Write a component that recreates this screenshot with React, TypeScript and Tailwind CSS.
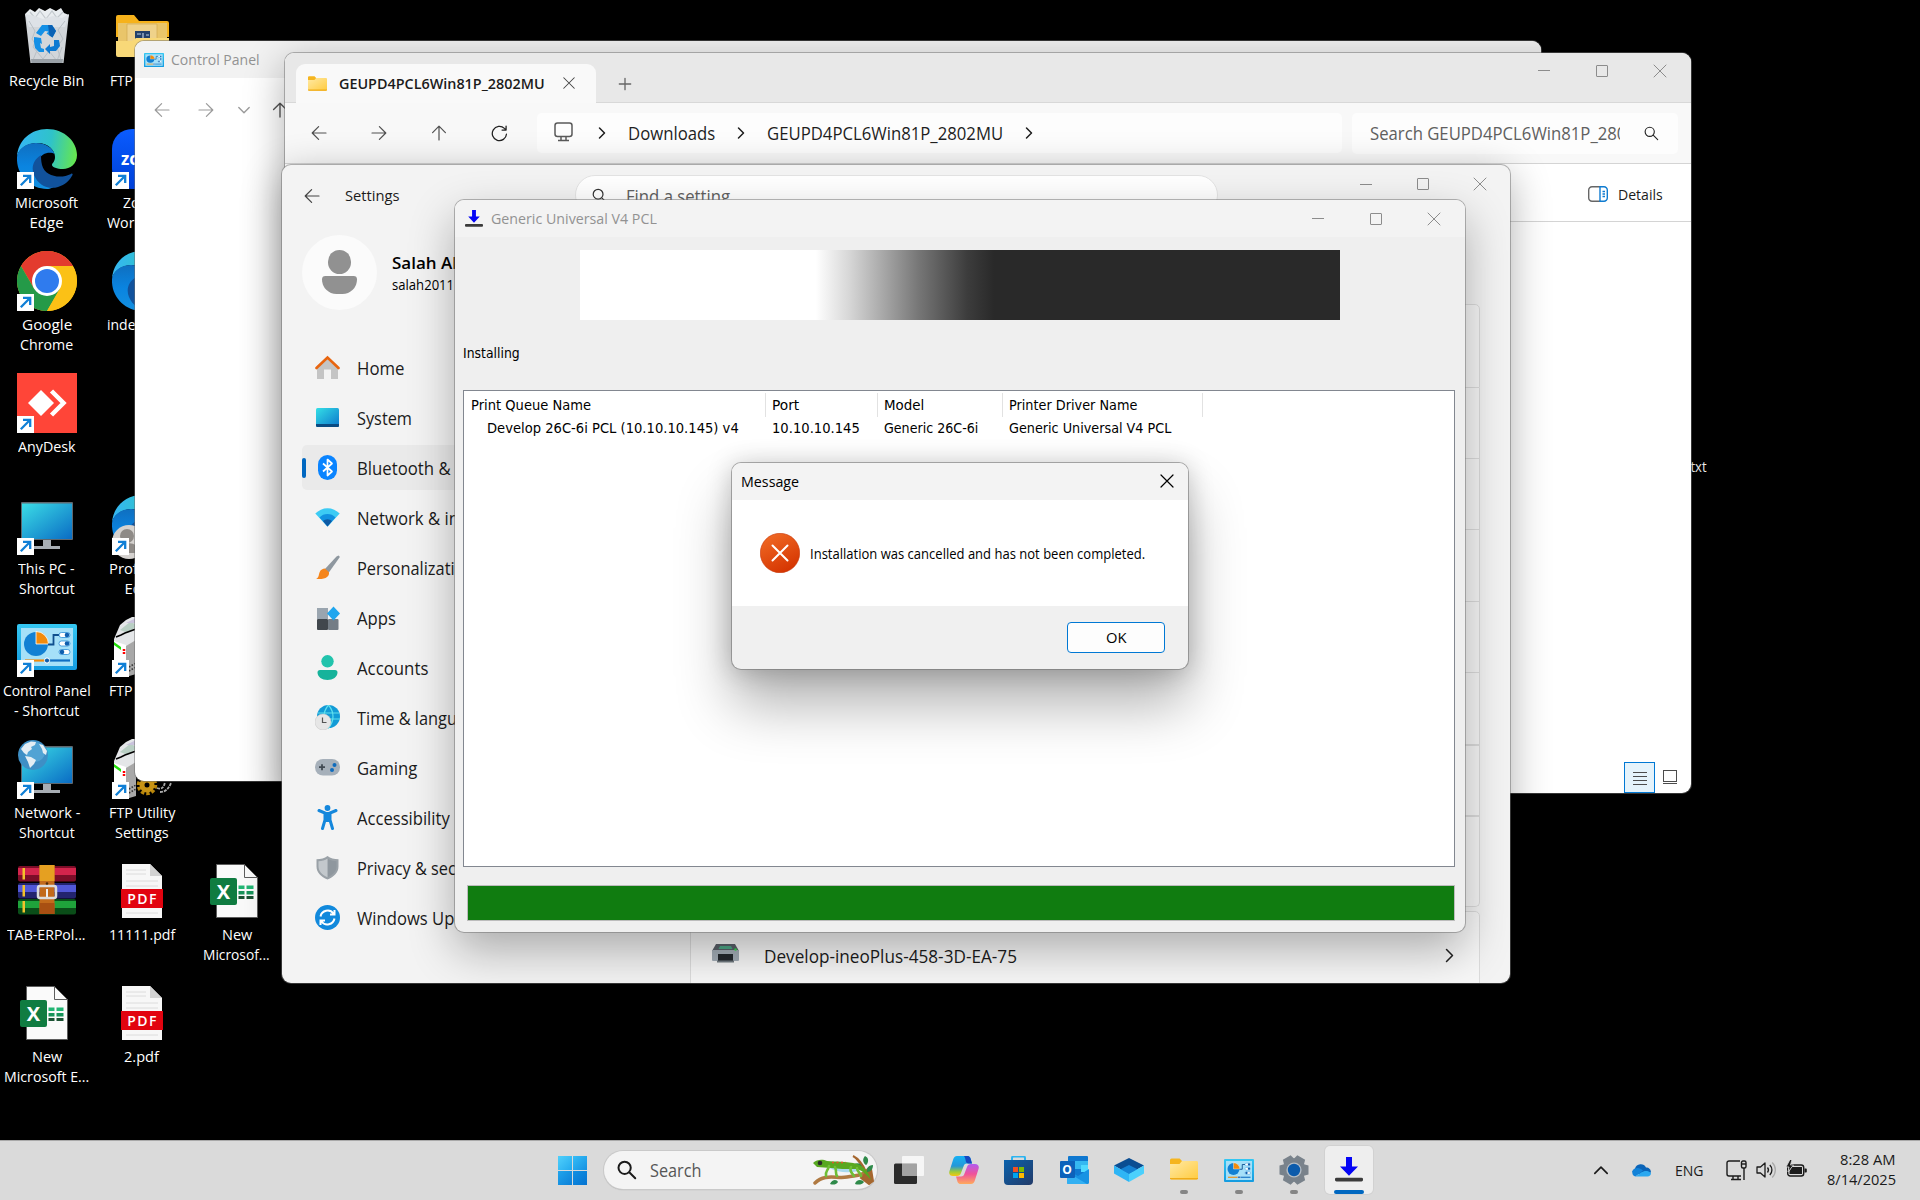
import { useLayoutEffect, useRef, useState, type ReactNode } from "react";

/* Single-line text condensed or widened to an exact width. */
function Fit({ w, className = "", children }: { w: number; className?: string; children: ReactNode }) {
  const ref = useRef<HTMLSpanElement>(null);
  const [k, setK] = useState(1);
  useLayoutEffect(() => {
    if (ref.current) setK(w / ref.current.offsetWidth);
  }, [w]);
  return (
    <span className={"block shrink-0 whitespace-nowrap " + className} style={{ width: w }}>
      <span ref={ref} className="inline-block origin-left" style={{ transform: `scaleX(${k})` }}>
        {children}
      </span>
    </span>
  );
}

/* ---------- line glyphs ---------- */

function Line({ d, s = 16, sw = 1.2, className = "" }: { d: string; s?: number; sw?: number; className?: string }) {
  return (
    <svg width={s} height={s} viewBox="0 0 16 16" fill="none" stroke="currentColor" strokeWidth={sw} strokeLinecap="round" strokeLinejoin="round" className={"shrink-0 " + className}>
      <path d={d} />
    </svg>
  );
}
const LEFT = "M15 8H1.2M7.6 1.6 1.2 8l6.4 6.4";
const RIGHT = "M1 8h13.8M8.4 1.6 14.8 8l-6.4 6.4";
const UP = "M8 15V1.2M1.6 7.6 8 1.2l6.4 6.4";
const CROSS = "M2 2l12 12M14 2 2 14";
const CHEV_R = "M5.5 3l5 5-5 5";
const CHEV_D = "M2.8 5.5 8 10.7l5.2-5.2";
const MAG = "M11 6.2a4.9 4.9 0 1 1-9.8 0 4.9 4.9 0 0 1 9.8 0zM9.8 9.8l4.8 4.8";

function Captions({ cell, h }: { cell: string; h: string }) {
  return (
    <div className={"ml-auto flex shrink-0 pr-[2px] text-[#8c8c8c] " + h}>
      <div className={"flex items-center justify-center " + cell}>
        <div className="h-px w-3 bg-[#8c8c8c]" />
      </div>
      <div className={"flex items-center justify-center " + cell}>
        <div className="h-3 w-3 rounded-[1px] border border-[#8c8c8c]" />
      </div>
      <div className={"flex items-center justify-center " + cell}>
        <Line d={CROSS} s={16} sw={1} />
      </div>
    </div>
  );
}

/* ---------- colour icons ---------- */

function Folder({ className = "" }: { className?: string }) {
  return (
    <svg viewBox="0 0 28 23" preserveAspectRatio="none" className={"shrink-0 " + className}>
      <defs>
        <linearGradient id="fold" x1="0" y1="0" x2="1" y2="1">
          <stop offset="0" stopColor="#ffe9a4" />
          <stop offset="1" stopColor="#ffcb3f" />
        </linearGradient>
      </defs>
      <path d="M0 2a1.6 1.6 0 0 1 1.6-1.6h8L12 3.200V7H0z" fill="#f5b51f" />
      <path d="M0 6.200h9.500l2.500-3h14.500A1.500 1.500 0 0 1 28 4.700V21a1.500 1.500 0 0 1-1.500 1.500h-25A1.500 1.500 0 0 1 0 21z" fill="url(#fold)" />
      <path d="M0 20.800h28a1.600 1.600 0 0 1-1.500 1.700h-25A1.600 1.600 0 0 1 0 20.800z" fill="#f0ab17" />
    </svg>
  );
}

function PanelIcon({ className = "" }: { className?: string }) {
  return (
    <svg viewBox="0 0 60 46" preserveAspectRatio="none" className={"shrink-0 " + className}>
      <defs>
        <linearGradient id="cpf" x1="0" y1="0" x2="0" y2="1">
          <stop offset="0" stopColor="#35c7f2" />
          <stop offset="1" stopColor="#149be0" />
        </linearGradient>
      </defs>
      <rect width="60" height="46" rx="2" fill="url(#cpf)" />
      <rect x="4" y="4" width="52" height="38" fill="#a5e0f8" />
      <circle cx="19" cy="20" r="12" fill="#1280d3" />
      <path d="M19 7.500A12.500 12.500 0 0 1 31.500 20H19z" fill="#f28b0c" stroke="#fff" strokeWidth=".8" />
      <path d="M31 20.500h5.500V11H42" fill="none" stroke="#0f4f8e" strokeWidth="1.800" />
      <rect x="42" y="8.500" width="11" height="5" rx="2.500" fill="#fff" stroke="#1280d3" strokeWidth=".7" />
      <circle cx="50" cy="11" r="2.300" fill="#0f5fae" />
      <rect x="42" y="17" width="11" height="5" rx="2.500" fill="#fff" stroke="#1280d3" strokeWidth=".7" />
      <circle cx="50" cy="19.500" r="2.300" fill="#0f5fae" />
      <rect x="42" y="25.500" width="11" height="5" rx="2.500" fill="#fff" stroke="#1280d3" strokeWidth=".7" />
      <circle cx="45" cy="28" r="2.300" fill="#0f5fae" />
      <path d="M8 36.500h20" stroke="#f28b0c" strokeWidth="2.200" />
      <path d="M32 36.500h21" stroke="#0f6fc4" strokeWidth="2.200" />
      <circle cx="30" cy="36.500" r="2.600" fill="#0f5fae" stroke="#fff" />
    </svg>
  );
}

function InstallIcon({ className = "" }: { className?: string }) {
  return (
    <svg viewBox="0 0 28 26" preserveAspectRatio="none" className={"shrink-0 " + className}>
      <path d="M11 0h6v10h6l-9 9.500L5 10h6z" fill="#0505f5" />
      <rect y="21.500" width="28" height="4" rx="1.500" fill="#3b3b3b" />
    </svg>
  );
}

function Recycle() {
  return (
    <svg width="60" height="60" viewBox="0 0 60 60">
      <path d="M8 7l5-5 5 3 4-4 6 3 5-3 6 3 5-3 3 5 5 2-4 12H12z" fill="#e9edf0" />
      <path d="M13 5l5 6 5-7 6 8 6-8 5 7 6-6" fill="none" stroke="#c3c9ce" strokeWidth="1.200" />
      <path d="M8 7l5.500 49h33L52 7l-7 4-9-2-10 3-8-3z" fill="#dde2e6" opacity=".95" />
      <path d="M12 14l6 10-3 8 6 9-5 12M48 14l-7 9 5 9-6 8 4 13M20 30l-4 10 10 12 6-8 8 10 5-14" fill="none" stroke="#b9c0c6" strokeWidth="1" />
      <path d="M14 52h32l-.5 4h-31z" fill="#9aa1a7" />
      <path d="M25 18h10l4 6-3.500 6.500-6-4 2-2-3.500-.5-4 5-5-3z" fill="#1490e6" />
      <path d="M31 18h4l4 6-3.500 6.500-3-2z" fill="#0b62b5" />
      <path d="M17 30l7 1 1 6-2-1 1 5 3 1v3h-5l-4-4-1-6z" fill="#1490e6" />
      <path d="M37 33l5 0 1 6-4 5h-6v3l-5-5 5-5v3l4-1z" fill="#0e7ad2" />
    </svg>
  );
}

function EdgeIcon() {
  return (
    <svg width="60" height="60" viewBox="0 0 60 60">
      <defs>
        <linearGradient id="e1" x1="0" y1=".4" x2="1" y2=".5">
          <stop offset="0" stopColor="#35b6f5" />
          <stop offset=".55" stopColor="#2fc3c9" />
          <stop offset="1" stopColor="#66e64f" />
        </linearGradient>
        <linearGradient id="e2" x1="0" y1="0" x2="0" y2="1">
          <stop offset="0" stopColor="#0f6fc0" />
          <stop offset=".5" stopColor="#0a84e0" />
          <stop offset="1" stopColor="#1390e0" />
        </linearGradient>
      </defs>
      <path d="M0 28C1 11 14 0 30 0c18 0 30 13 30 26 0 9-7 14-14 14-6 0-11-2-11-4s3-3 3-8c0-6-6-14-18-14C9 14 1 21 0 28z" fill="url(#e1)" />
      <path d="M0 28c1-8 9-14 19-14 11 0 17 6 18.500 11C35 23 24 22 21 33c-2 8 5 20 16 23 3 1-3 4-7 4C13 60-1 46 0 28z" fill="url(#e2)" />
      <path d="M24 26c-8 5-10 13-7 20 4 10 14 15 24 12 7-2 12-7 14.500-12 .5-1-.5-2-1.500-1-10 5-26 3-29-9-1-4-1-8-1-10z" fill="#11529c" />
    </svg>
  );
}

function ChromeIcon() {
  return (
    <svg width="60" height="60" viewBox="0 0 60 60">
      <circle cx="30" cy="30" r="30" fill="#fbc116" />
      <path d="M4 15A30 30 0 0 1 56 15H30L17 37.500z" fill="#e33b2e" />
      <path d="M4 15A30 30 0 0 0 30 60l13-22.500-26 0z" fill="#249a48" />
      <path d="M30 15h26a30 30 0 0 1-26 45l13-22.500z" fill="#fbc116" />
      <circle cx="30" cy="30" r="15" fill="#fff" />
      <circle cx="30" cy="30" r="12" fill="#2f7bee" />
    </svg>
  );
}

function AnyDesk() {
  return (
    <svg width="60" height="60" viewBox="0 0 60 60">
      <rect width="60" height="60" fill="#ff4538" />
      <path d="M24 17l13 13-13 13-13-13z" fill="#fff" />
      <path d="M34.500 18l12 12-12 12" fill="none" stroke="#fff" strokeWidth="4.500" />
    </svg>
  );
}

function Monitor({ globe = false }: { globe?: boolean }) {
  return (
    <svg width="60" height="60" viewBox="0 0 60 60">
      <defs>
        <linearGradient id="mon" x1="0" y1="0" x2="1" y2="1">
          <stop offset="0" stopColor="#3bdde6" />
          <stop offset="1" stopColor="#0a6cc4" />
        </linearGradient>
      </defs>
      <rect x="4" y="7" width="52" height="38" rx="1" fill="#5f676e" />
      <rect x="5" y="8.500" width="50" height="35.500" fill="url(#mon)" />
      <path d="M26 45h8v6h9v3H17v-3h9z" fill="#a7adb3" />
      {globe && (
        <>
          <circle cx="16" cy="16" r="15" fill="#3e8fc5" />
          <circle cx="18" cy="13" r="10" fill="#5fb0de" opacity=".6" />
          <path d="M4 10l4-5 6-2.500 5 .5-1 3-4 2 1 2-4 3-1 3-3-2zM22 5l4 1 4 6-1 4-3-2-1-4zM8 17l6 1 5 3-2 4-4 4-2-6z" fill="#e4eef4" />
        </>
      )}
    </svg>
  );
}

function Rar() {
  const books = [
    { y: 1, a: "#d3244c", b: "#7c0d28" },
    { y: 18, a: "#5158d8", b: "#23246e" },
    { y: 34, a: "#1fa33b", b: "#0a4d18" },
  ];
  return (
    <svg width="60" height="60" viewBox="0 0 60 60" className="mt-1">
      {books.map((b) => (
        <g key={b.y}>
          <rect x="1" y={b.y} width="58" height="15.500" rx="2" fill={b.b} />
          <rect x="1" y={b.y + 2} width="58" height="7" fill={b.a} />
          <rect x="5.500" y={b.y + 2} width="2.500" height="11.500" fill="#f4c22b" />
        </g>
      ))}
      <rect x="22.500" y="0" width="15" height="49" fill="#c26a1b" />
      <rect x="22.500" y="0" width="15" height="16" fill="#e5a021" />
      <rect x="22.500" y="38" width="15" height="11" fill="#a84f12" />
      <rect x="21" y="21" width="18" height="12" rx="2" fill="none" stroke="#dcdcdc" strokeWidth="2.500" />
      <path d="M30 24v8" stroke="#eee" strokeWidth="2" />
      <circle cx="30" cy="18.500" r="1.300" fill="#4d2a08" />
    </svg>
  );
}

function Pdf() {
  return (
    <div className="flex w-[60px] justify-center pt-[3px]">
      <div className="relative h-[54px] w-10">
        <svg width="40" height="54" viewBox="0 0 40 54">
          <path d="M0 0h28l12 12v42H0z" fill="#f7f7f7" />
          <path d="M28 0v12h12z" fill="#d2d2d2" />
          <path d="M4 6h20M4 10h20M4 17h32M4 22h32M4 49h32" stroke="#dcdcdc" />
        </svg>
        <div className="absolute top-[25px] -left-px flex h-[19px] w-[42px] items-center justify-center bg-[#e2030f] pl-px text-[14px] leading-none font-semibold tracking-[1.400px] text-white">
          PDF
        </div>
      </div>
    </div>
  );
}

function Excel() {
  return (
    <div className="relative w-[60px] pt-[3px] pl-[9px]">
      <svg width="42" height="54" viewBox="0 0 42 54">
        <path d="M.5.5h28l13 13v40H.5z" fill="#fafafa" stroke="#5d5d5d" />
        <path d="M28.500.5v13h13" fill="none" stroke="#5d5d5d" />
        <path d="M22.500 21.500h6v3.500h-6zM30.500 21.500h7v3.500h-7z" fill="#22b573" />
        <path d="M22.500 27h6v3.500h-6zM30.500 27h7v3.500h-7z" fill="#18935a" />
        <path d="M22.500 32h6v3h-6zM30.500 32h7v3h-7z" fill="#1b5233" />
      </svg>
      <div className="absolute top-[17px] left-[3px] flex h-[27px] w-[27px] items-center justify-center rounded-[2px] bg-[#107c41] text-[20px] leading-none font-bold text-white">X</div>
    </div>
  );
}

function FtpBox({ gear = false }: { gear?: boolean }) {
  return (
    <svg width="60" height="60" viewBox="0 0 60 60">
      <path d="M2 22L8 8l6-5 10-5 30 4v50L22 57 2 54z" fill="#e4e6e8" />
      <path d="M8 13l10-8 8 3-10 8z" fill="#b9cfc4" />
      <path d="M14 6l10-5v5z" fill="#c9c3dc" />
      <path d="M4 20l5-2 4-2 11-4" fill="none" stroke="#000" strokeWidth="1.500" />
      <path d="M2 24l12 4v28L2 54z" fill="#fff" />
      <path d="M2 25l7 5v3l-7-5z" fill="#22e00a" />
      <path d="M12 32v6" stroke="#f00" strokeWidth="2.500" strokeDasharray="2 1" />
      <path d="M14 29l10-6v34l-10 3z" fill="#a8a8a8" />
      <path d="M17 54l7-4M17 50l7-4" stroke="#333" strokeWidth="1.500" strokeDasharray="1.500 1.500" />
      {gear && (
        <>
          <path d="M24 38h38v26H24z" fill="#000" />
          <circle cx="35" cy="46" r="8" fill="none" stroke="#b8860b" strokeWidth="4.500" strokeDasharray="3.200 1.800" />
          <circle cx="35" cy="46" r="5" fill="none" stroke="#c79315" strokeWidth="5" />
          <path d="M45 49c5 2 7-1 8-6M48 53c6 0 9-4 11-9" fill="none" stroke="#aaa" strokeWidth="1.800" strokeDasharray="3 1" />
        </>
      )}
    </svg>
  );
}

function Zoomed() {
  return (
    <div className="flex h-[60px] w-[60px] items-center rounded-[20px] bg-gradient-to-b from-[#0b5cff] to-[#0040d8] pl-[9px] text-[17px] font-bold text-white">zoom</div>
  );
}

function ProfileEdge() {
  return (
    <div className="relative">
      <EdgeIcon />
      <svg width="34" height="34" viewBox="0 0 34 34" className="absolute top-[30px] left-0">
        <circle cx="17" cy="17" r="17" fill="#d5d2cf" />
        <circle cx="15" cy="11" r="7" fill="#8f8b87" />
        <path d="M3 28a13 10 0 0 1 26 0z" fill="#8f8b87" />
      </svg>
    </div>
  );
}

function FtpFolder() {
  return (
    <div className="pt-2 pl-1">
      <svg width="53" height="42" viewBox="0 0 53 42">
        <path d="M0 2a2 2 0 0 1 2-2h16l5 6h28a2 2 0 0 1 2 2v14H0z" fill="#f6b21b" />
        <path d="M2 8h49v20H2z" fill="#e9c56a" />
        <path d="M11 9h30v18H11z" fill="#efd28a" stroke="#d3ab4e" strokeWidth=".7" />
        <path d="M19 16h15v9H19z" fill="#21406a" />
        <path d="M21 19h4M27 18v5M30 20h3" stroke="#b9cbe0" strokeWidth="1.200" />
        <path d="M0 26h16l4-3h33v17a2 2 0 0 1-2 2H2a2 2 0 0 1-2-2z" fill="#f8d878" />
      </svg>
    </div>
  );
}

function Shortcut() {
  return (
    <svg width="17" height="17" viewBox="0 0 17 17" className="absolute bottom-0 left-0">
      <rect width="17" height="17" fill="#fff" />
      <path d="M3.800 13.200l8.400-8.400M6 3.800h7.200V11" fill="none" stroke="#0f7fd6" strokeWidth="2.300" />
    </svg>
  );
}

type Label = [string, number];
type Desk = { icon: ReactNode; link?: boolean; labels: Label[] } | null;

const columns: Desk[][] = [
  [
    { icon: <Recycle />, labels: [["Recycle Bin", 75]] },
    { icon: <EdgeIcon />, link: true, labels: [["Microsoft", 63], ["Edge", 34]] },
    { icon: <ChromeIcon />, link: true, labels: [["Google", 50], ["Chrome", 53]] },
    { icon: <AnyDesk />, link: true, labels: [["AnyDesk", 58]] },
    { icon: <Monitor />, link: true, labels: [["This PC -", 57], ["Shortcut", 56]] },
    { icon: <div className="pt-[7px]"><PanelIcon className="h-[46px] w-[60px]" /></div>, link: true, labels: [["Control Panel", 88], ["- Shortcut", 65]] },
    { icon: <Monitor globe />, link: true, labels: [["Network -", 66], ["Shortcut", 56]] },
    { icon: <Rar />, labels: [["TAB-ERPol...", 79]] },
    { icon: <Excel />, labels: [["New", 30], ["Microsoft E...", 85]] },
  ],
  [
    { icon: <FtpFolder />, labels: [["FTP Utility", 63]] },
    { icon: <Zoomed />, link: true, labels: [["Zoom", 38], ["Workplace", 70]] },
    { icon: <EdgeIcon />, labels: [["index.html", 70]] },
    null,
    { icon: <ProfileEdge />, link: true, labels: [["Profile 1 -", 65], ["Edge", 34]] },
    { icon: <FtpBox />, link: true, labels: [["FTP Utility", 65]] },
    { icon: <FtpBox gear />, link: true, labels: [["FTP Utility", 66], ["Settings", 54]] },
    { icon: <Pdf />, labels: [["11111.pdf", 66]] },
    { icon: <Pdf />, labels: [["2.pdf", 35]] },
  ],
  [null, null, null, null, null, null, null, { icon: <Excel />, labels: [["New", 30], ["Microsof...", 67]] }, null],
];

function DesktopIcons() {
  return (
    <div className="flex pt-[7px]">
      {columns.map((col, i) => (
        <div key={i} className="w-[95px] shrink-0">
          {col.map((it, j) => (
            <div key={j} className="flex h-[122px] w-[94px] flex-col items-center">
              {it && (
                <>
                  <div className="relative h-[60px] w-[60px] shrink-0">
                    {it.icon}
                    {it.link && <Shortcut />}
                  </div>
                  <div className="flex flex-col items-center pt-[3px] pr-px text-[15px] leading-5 text-white">
                    {it.labels.map(([t, w]) => (
                      <Fit key={t} w={w}>{t}</Fit>
                    ))}
                  </div>
                </>
              )}
            </div>
          ))}
        </div>
      ))}
    </div>
  );
}

/* ---------- windows ---------- */

function ControlPanel() {
  return (
    <div className="absolute top-[41px] left-[135px] h-[740px] w-[1406px] overflow-hidden rounded-[9px] bg-white shadow-[0_0_0_1px_rgba(110,110,110,0.5)]">
      <div className="flex h-[37px] items-center bg-[#f2f2f2] pl-[9px]">
        <PanelIcon className="h-[14px] w-5" />
        <Fit w={89} className="-mt-[2px] ml-[7px] text-[15px] leading-5 text-[#929292]">Control Panel</Fit>
      </div>
      <div className="flex h-[64px] items-center pl-[19px] text-[#9b9b9b]">
        <Line d={LEFT} s={16} />
        <Line d={RIGHT} s={16} className="ml-[28px]" />
        <Line d={CHEV_D} s={16} sw={1.400} className="ml-[22px]" />
        <Line d={UP} s={16} sw={1.400} className="ml-[20px] text-[#555]" />
      </div>
    </div>
  );
}

function Explorer() {
  return (
    <div className="absolute top-[53px] left-[285px] h-[740px] w-[1406px] rounded-[9px] bg-white shadow-[0_0_0_1px_rgba(110,110,110,0.5),0_10px_40px_rgba(0,0,0,0.32)]">
      <div className="flex h-[740px] flex-col overflow-hidden rounded-[9px]">
        <div className="flex h-[50px] border-b border-[#d8d8d8] bg-[#e8e8e8]">
          <div className="mt-[11px] -mb-px ml-[11px] flex h-[39px] w-[300px] items-center rounded-t-[9px] bg-[#f9f9f9] pl-3">
            <Folder className="h-[15px] w-[19px]" />
            <Fit w={206} className="-mt-[2px] ml-[12px] text-[15px] leading-5 font-semibold text-[#1b1b1b]">GEUPD4PCL6Win81P_2802MU</Fit>
            <Line d={CROSS} s={14} sw={1.200} className="-mt-px ml-[17px] text-[#444]" />
          </div>
          <Line d="M8 1.500v13M1.500 8h13" s={14} sw={1.500} className="mt-[24px] ml-[22px] text-[#666]" />
          <Captions cell="w-[58px]" h="h-[35px]" />
        </div>
        <div className="flex h-[61px] shrink-0 items-center border-b border-[#d4d4d4] bg-[#f8f8f8] pl-[26px] text-[#505050]">
          <Line d={LEFT} />
          <Line d={RIGHT} className="ml-[44px]" />
          <Line d={UP} className="ml-[44px]" />
          <Line d="M14.600 8.500A6.700 6.700 0 1 1 12.600 3.200L14 4.500M14.200 1v3.800h-3.800" className="ml-[44px] text-[#222]" s={17} />
          <div className="ml-[29px] flex h-10 w-[805px] items-center rounded-[5px] bg-[#fdfdfd] pl-[17px] text-[17.500px] leading-6 text-[#1f1f1f]">
            <svg width="19" height="20" viewBox="0 0 19 20" fill="none" stroke="#5a5a5a" strokeWidth="1.500" className="-mt-[2px]">
              <rect x="1" y="1" width="17" height="13.500" rx="2.500" />
              <path d="M7 15v3M12 15v3M4 18.500h11" />
            </svg>
            <Line d={CHEV_R} sw={1.500} className="ml-[21px]" />
            <Fit w={87} className="-mt-px ml-[18px]">Downloads</Fit>
            <Line d={CHEV_R} sw={1.500} className="ml-[18px]" />
            <Fit w={236} className="ml-[18px]">GEUPD4PCL6Win81P_2802MU</Fit>
            <Line d={CHEV_R} sw={1.500} className="ml-[18px]" />
          </div>
          <div className="ml-[10px] flex h-[41px] w-[326px] items-center rounded-[5px] bg-[#fdfdfd] pl-[18px] text-[17.500px] leading-6 text-[#606060]">
            <div className="w-[250px] overflow-hidden">
              <Fit w={293}>Search GEUPD4PCL6Win81P_2802MU</Fit>
            </div>
            <Line d={MAG} s={15} className="ml-[24px] text-[#222]" />
          </div>
        </div>
        <div className="flex h-[58px] shrink-0 items-center justify-end border-b border-[#d4d4d4] pt-[2px] pr-[28px]">
          <svg width="20" height="16" viewBox="0 0 20 16" fill="none" strokeWidth="1.400">
            <path d="M12 .7H4A3.300 3.300 0 0 0 .7 4v8A3.300 3.300 0 0 0 4 15.300h8" stroke="#666" />
            <path d="M12 .7h4A3.300 3.300 0 0 1 19.300 4v8a3.300 3.300 0 0 1-3.300 3.300h-4zM14.500 5.500h2.500M14.500 8h2.500M14.500 10.500h2.500" stroke="#0f7bd0" />
          </svg>
          <Fit w={45} className="ml-[10px] text-[15px] leading-5 text-[#1b1b1b]">Details</Fit>
        </div>
        <div className="flex flex-1 items-end justify-end pr-[14px]">
          <div className="flex h-[31px] w-[31px] flex-col items-center gap-[3px] border border-[#0078d4] bg-[#e5f3fb] pt-[9px]">
            <div className="h-px w-[14px] bg-[#4c4c4c]" />
            <div className="h-px w-[14px] bg-[#4c4c4c]" />
            <div className="h-px w-[14px] bg-[#4c4c4c]" />
            <div className="h-px w-[14px] bg-[#4c4c4c]" />
          </div>
          <div className="mb-[9px] ml-2 flex flex-col gap-px">
            <div className="h-3 w-[14px] border border-[#4c4c4c]" />
            <div className="h-px w-[14px] bg-[#4c4c4c]" />
          </div>
        </div>
      </div>
    </div>
  );
}

const nav: [string, number, ReactNode][] = [
  ["Home", 47, <><path d="M2 11v13h7v-9.500h7V24h7V11l-10.500-9z" fill="#c4c4c4" /><path d="M1.500 13 12.500 2.500l11 10.500" fill="none" stroke="#e8650f" strokeWidth="2.600" strokeLinecap="round" /></>],
  ["System", 55, <><rect x="1" y="3" width="23" height="19" rx="1.500" fill="url(#sys)" /><path d="M1 19h23v1.500a1.500 1.500 0 0 1-1.500 1.500h-20A1.500 1.500 0 0 1 1 20.500z" fill="#0a4b82" /></>],
  ["Bluetooth & devices", 156, <><rect x="3" width="19" height="25" rx="9.500" fill="#0a84ff" /><path d="M8 8.500l9 8-4.500 4V4.500l4.500 4-9 8" fill="none" stroke="#fff" strokeWidth="1.700" strokeLinejoin="round" /></>],
  ["Network & internet", 150, <><path d="M.3 8.500a17 17 0 0 1 24.400 0L12.500 21.500z" fill="#3ccbf4" /><path d="M4.500 12.500a11 11 0 0 1 16 0l-8 9z" fill="#1191e0" /><path d="M8 16a6.500 6.500 0 0 1 9 0l-4.500 5.500z" fill="#0c59a4" /></>],
  ["Personalization", 118, <><path d="M23.500.5c1 .5 1.500 1.200 1 2L13.500 18l-4-3.500L21.500 1.500z" fill="#8e979f" /><path d="M10 13.500l4 3.800c.5 4.200-3 7.500-13 6.700 3-1.500 2.500-3.500 3.500-6.500s3.500-4 5.500-4z" fill="#f5851b" /></>],
  ["Apps", 39, <><rect x="2" y="3" width="11" height="11" fill="#9aa5af" /><rect x="2" y="14" width="11" height="11" rx="1" fill="#41474d" /><rect x="13" y="14" width="10.500" height="11" rx="1" fill="#747d86" /><path d="M18.500 1.500l6.500 7-6.500 7-6.500-7z" fill="#1fa6ee" /></>],
  ["Accounts", 71, <><circle cx="12.500" cy="6.300" r="6.200" fill="#21c3ac" /><path d="M2.500 17.500a2.500 2.500 0 0 1 2.500-2.500h15a2.500 2.500 0 0 1 2.500 2.500C22.500 22 18 25 12.500 25s-10-3-10-7.500z" fill="#16b39b" /></>],
  ["Time & language", 127, <><circle cx="13.500" cy="11.500" r="11.500" fill="#129bd6" /><path d="M3 8h21M2 14h23M13.500 0c-6 7-6 16 0 23 6-7 6-16 0-23" fill="none" stroke="#5fe0ee" strokeWidth="1.200" /><circle cx="8" cy="17" r="8" fill="#e6e6e6" stroke="#c4c4c4" strokeWidth=".5" /><path d="M7.500 12.500V17.500h4" fill="none" stroke="#555" strokeWidth="1.200" /></>],
  ["Gaming", 60, <><rect x="0" y="4" width="25" height="16.500" rx="8" fill="#a6b0ba" /><path d="M4 12.200h6M7 9.200v6" stroke="#414a53" strokeWidth="1.800" /><circle cx="19.500" cy="10" r="2" fill="#0f6cbd" /><circle cx="17" cy="15" r="2" fill="#0f6cbd" /></>],
  ["Accessibility", 93, <><circle cx="12.500" cy="3" r="2.900" fill="#1487dc" /><path d="M4 5.500l6 2.500v7L7.500 23.500M21 5.500l-6 2.500v7l2.500 8.500" fill="none" stroke="#1487dc" strokeWidth="3" strokeLinecap="round" /><path d="M9 7h7v10H9z" fill="#1487dc" /></>],
  ["Privacy & security", 133, <><path d="M12.500 1c3 2.300 6.500 3.300 11 3.300v7.200c0 6-4.500 10.500-11 13-6.500-2.500-11-7-11-13V4.300C6 4.300 9.500 3.300 12.500 1z" fill="#9aa1a7" /><path d="M12.500 3.500c2.500 1.800 5.500 2.700 9 2.800v5c0 5-3.500 8.500-9 11z" fill="#8f979e" /><path d="M12.500 3.500c-2.500 1.800-5.500 2.700-9 2.800v5c0 5 3.500 8.500 9 11z" fill="#c3c8cc" /></>],
  ["Windows Update", 132, <><circle cx="12.500" cy="12.500" r="12.500" fill="#1189dc" /><path d="M5.500 11.500a7.300 7.300 0 0 1 13-3M19.500 13.500a7.300 7.300 0 0 1-13 3M19.500 5v4.500H15M5.500 20v-4.500H10" fill="none" stroke="#fff" strokeWidth="2" /></>],
];

function Settings() {
  return (
    <div className="absolute top-[165px] left-[282px] h-[818px] w-[1228px] rounded-[9px] bg-[#f3f3f3] shadow-[0_0_0_1px_rgba(110,110,110,0.5),0_10px_40px_rgba(0,0,0,0.32)]">
      <div className="flex h-[818px] flex-col overflow-hidden rounded-[9px]">
        <div className="flex h-[70px] shrink-0">
          <div className="flex h-[62px] items-center pl-[22px]">
            <Line d={LEFT} className="text-[#444]" />
            <Fit w={55} className="-mt-[2px] ml-[25px] text-[15px] leading-5 text-[#1b1b1b]">Settings</Fit>
          </div>
          <div className="mt-[10px] ml-[175px] flex h-10 w-[643px] items-center rounded-[20px] border border-[#e3e3e3] bg-white pt-px pl-4">
            <Line d={MAG} s={16} className="text-[#333]" />
            <Fit w={104} className="ml-[18px] text-[17.500px] leading-6 text-[#606060]">Find a setting</Fit>
          </div>
          <Captions cell="w-[57px]" h="h-[38px]" />
        </div>
        <div className="flex flex-1">
          <div className="w-[408px] shrink-0 pl-5">
            <div className="flex">
              <div className="flex h-[75px] w-[75px] shrink-0 flex-col items-center rounded-full bg-[#fbfbfb] pt-[15px]">
                <div className="h-[24px] w-[23px] rounded-full bg-[#919191]" />
                <div className="mt-[2px] h-[18px] w-[35px] rounded-t-[4px] rounded-b-[17px] bg-[#919191]" />
              </div>
              <div className="flex flex-col pt-[17px] pl-[15px] text-black">
                <Fit w={65} className="text-[17px] leading-[22px] font-semibold">Salah Al</Fit>
                <Fit w={62} className="text-[15px] leading-5">salah2011</Fit>
              </div>
            </div>
            <div className="flex flex-col gap-[5px] pt-[35px]">
              {nav.map(([t, w, g], i) => (
                <div key={t} className={"flex h-[45px] w-[380px] shrink-0 items-center rounded-[5px] " + (i === 2 ? "bg-[#eaeaea]" : "")}>
                  <div className={"h-5 w-1 rounded-full " + (i === 2 ? "bg-[#0067c0]" : "")} />
                  <svg width="25" height="25" viewBox="0 0 25 25" className="ml-[9px] shrink-0">
                    <defs>
                      <linearGradient id="sys" x1="0" y1="0" x2="1" y2="1">
                        <stop offset="0" stopColor="#34dfe6" />
                        <stop offset="1" stopColor="#0c76cc" />
                      </linearGradient>
                    </defs>
                    {g}
                  </svg>
                  <Fit w={w} className="ml-[17px] text-[17.500px] leading-6 text-[#1b1b1b]">{t}</Fit>
                </div>
              ))}
            </div>
          </div>
          <div className="flex w-[790px] shrink-0 flex-col pt-[69px]">
            <div className="h-[84px] rounded-t-[5px] border border-[#dcdcdc] bg-[#f7f7f7]" />
            <div className="h-[71px] border border-t-0 border-[#dcdcdc] bg-[#f7f7f7]" />
            <div className="h-[71px] border border-t-0 border-[#dcdcdc] bg-[#f7f7f7]" />
            <div className="h-[72px] border border-t-0 border-[#dcdcdc] bg-[#f7f7f7]" />
            <div className="h-[71px] border border-t-0 border-[#dcdcdc] bg-[#f7f7f7]" />
            <div className="h-[72px] border border-t-0 border-[#dcdcdc] bg-[#f7f7f7]" />
            <div className="h-[72px] border border-b-2 border-[#dcdcdc] bg-[#f7f7f7]" />
            <div className="h-[90px] rounded-b-[5px] border border-t-0 border-[#dcdcdc] bg-[#f7f7f7]" />
            <div className="mt-[4px] flex h-[90px] items-center rounded-t-[5px] border border-[#dcdcdc] bg-[#f7f7f7] pr-[20px] pl-[21px]">
              <svg width="27" height="20" viewBox="0 0 27 20" className="-mt-1 shrink-0">
                <path d="M4 0h19l4 7H0z" fill="#596068" />
                <path d="M8 2h11l1.500 3h-14z" fill="#4da886" />
                <rect y="6" width="27" height="11" rx="1" fill="#a4aeb7" />
                <rect x="6" y="10" width="15" height="7" fill="#23282d" />
                <path d="M5 16.500h17v2H5z" fill="#6f787f" />
                <circle cx="23.500" cy="5.500" r="1.200" fill="#32e04b" />
              </svg>
              <Fit w={253} className="ml-[25px] text-[17.500px] leading-6 text-[#1b1b1b]">Develop-ineoPlus-458-3D-EA-75</Fit>
              <Line d={CHEV_R} s={19} sw={1.300} className="-mt-[2px] ml-auto text-[#222]" />
            </div>
          </div>
        </div>
      </div>
    </div>
  );
}

function Installer() {
  return (
    <div className="absolute top-[200px] left-[455px] flex h-[732px] w-[1010px] flex-col rounded-[9px] bg-[#efefef] shadow-[0_0_0_1px_rgba(110,110,110,0.5),0_18px_46px_rgba(0,0,0,0.3)]">
      <div className="flex h-[37px] shrink-0 items-center rounded-t-[9px] bg-[#f3f3f3] pl-[10px]">
        <InstallIcon className="h-[17px] w-[18px]" />
        <Fit w={166} className="-mt-[2px] ml-[8px] text-[15px] leading-5 text-[#929292]">Generic Universal V4 PCL</Fit>
        <Captions cell="w-[58px]" h="h-[35px]" />
      </div>
      <div className="mt-[13px] ml-[125px] h-[70px] w-[760px] shrink-0 bg-[linear-gradient(90deg,#fff_0%,#fff_31%,#d6d6d6_35.500%,#777_44.500%,#3c3c3c_51%,#292929_54.500%)]" />
      <Fit w={57} className="mt-[23px] ml-[8px] font-['DejaVu_Sans'] text-[13.750px] leading-5 text-black">Installing</Fit>
      <div className="mt-[27px] ml-[8px] flex h-[477px] w-[992px] shrink-0 flex-col border border-[#828790] bg-white font-['DejaVu_Sans'] text-[13.750px] leading-5 text-black">
        <div className="flex h-[27px] items-center">
          <Fit w={120} className="ml-[7px]">Print Queue Name</Fit>
          <div className="ml-[174px] h-6 w-px bg-[#e2e2e2]" />
          <Fit w={27} className="ml-[6px]">Port</Fit>
          <div className="ml-[78px] h-6 w-px bg-[#e2e2e2]" />
          <Fit w={40} className="ml-[6px]">Model</Fit>
          <div className="ml-[78px] h-6 w-px bg-[#e2e2e2]" />
          <Fit w={128} className="ml-[6px]">Printer Driver Name</Fit>
          <div className="ml-[65px] h-6 w-px bg-[#e2e2e2]" />
        </div>
        <div className="flex h-[20px] items-center">
          <Fit w={252} className="ml-[23px]">Develop 26C-6i PCL (10.10.10.145) v4</Fit>
          <Fit w={88} className="ml-[33px]">10.10.10.145</Fit>
          <Fit w={94} className="ml-[24px]">Generic 26C-6i</Fit>
          <Fit w={162} className="ml-[31px]">Generic Universal V4 PCL</Fit>
        </div>
      </div>
      <div className="mt-[18px] ml-3 h-[36px] w-[988px] shrink-0 border border-[#bcbcbc] bg-[#107c10]" />
    </div>
  );
}

function Message() {
  return (
    <div className="absolute top-[463px] left-[732px] flex h-[206px] w-[456px] flex-col rounded-[9px] bg-[#f0f0f0] shadow-[0_0_0_1px_rgba(110,110,110,0.55),0_36px_56px_rgba(0,0,0,0.3),0_2px_26px_rgba(0,0,0,0.22)]">
      <div className="flex h-[37px] shrink-0 items-center justify-between rounded-t-[9px] bg-[#f3f3f3] pr-[13px] pb-[2px] pl-[9px]">
        <Fit w={58} className="text-[15px] leading-5 text-black">Message</Fit>
        <Line d={CROSS} s={16} sw={1.200} className="text-black" />
      </div>
      <div className="flex h-[106px] shrink-0 items-center bg-white pl-7">
        <svg width="40" height="40" viewBox="0 0 40 40">
          <defs>
            <linearGradient id="err" x1=".2" y1="0" x2=".7" y2="1">
              <stop offset="0" stopColor="#f06a25" />
              <stop offset="1" stopColor="#d43300" />
            </linearGradient>
          </defs>
          <circle cx="20" cy="20" r="19.700" fill="url(#err)" stroke="#c8370a" strokeWidth=".6" />
          <path d="M12.500 12.500l15 15M27.500 12.500l-15 15" stroke="#fff" strokeWidth="2" strokeLinecap="round" />
        </svg>
        <Fit w={335} className="ml-[10px] pt-px text-[14px] leading-5 text-black">Installation was cancelled and has not been completed.</Fit>
      </div>
      <div className="flex flex-1 items-start justify-end pt-4 pr-[23px]">
        <div className="flex h-[31px] w-[98px] items-center justify-center rounded-[4px] border border-[#0078d4] bg-[#fdfdfd] pr-px">
          <Fit w={20} className="text-[14px] leading-5 text-black">OK</Fit>
        </div>
      </div>
    </div>
  );
}

/* ---------- taskbar ---------- */

function Lizard() {
  return (
    <svg width="61" height="30" viewBox="0 0 61 30" className="shrink-0">
      <path d="M2 28C12 18 24 24 34 22c10-2 14 0 22-8" fill="none" stroke="#b07a42" strokeWidth="3.500" strokeLinecap="round" />
      <path d="M40 1c6 3 10 9 13 16M57 13c-3 4-5 6-9 10l8 6 4-3-2-12z" fill="#a5672f" stroke="#a5672f" strokeWidth="2" />
      <path d="M52 1c5 2 3 8 1 9-3-2-4-6-1-9zM41 9c5-2 8 1 8 3-4 2-7 0-8-3zM60 10c-5 0-7 4-6 7 4 0 6-3 6-7z" fill="#2f8a4a" />
      <path d="M17 29c2-5 7-5 8-2-2 3-5 3-8 2zM42 29c1-5 7-5 9-2-2 3-6 3-9 2z" fill="#2f8a4a" />
      <path d="M18 11c8 4 18 5 28 2" stroke="#a9d9ee" strokeWidth="5" fill="none" />
      <path d="M0 8c4-4 10-4 14-2 8 1 20 0 30 3 8 3 12 9 14 16-5-6-9-10-15-11-10 0-18 0-25-1L4 12z" fill="#58a821" />
      <path d="M16 11c-1 5-4 5-3 10M22 12c2 4 0 6 2 9M38 12c-2 4 1 6 3 9M44 13c0 4 4 5 4 8" fill="none" stroke="#6fbe35" strokeWidth="2.600" strokeLinecap="round" />
      <circle cx="7" cy="8" r="2.300" fill="#2b2b2b" />
      <path d="M19 7.500h14" stroke="#e2552b" strokeWidth="1.400" strokeDasharray="2 2.500" />
    </svg>
  );
}

function Slot({ children, state = "" }: { children: ReactNode; state?: string }) {
  return (
    <div className={"relative flex h-12 w-12 shrink-0 items-center justify-center rounded-[5px] " + (state === "on" ? "bg-[#eeeeee] shadow-[0_0_0_1px_rgba(0,0,0,0.04)]" : "")}>
      {children}
      {state === "run" && <div className="absolute bottom-0 h-1 w-2 rounded-full bg-[#858585]" />}
      {state === "on" && <div className="absolute bottom-0 h-1 w-[30px] rounded-full bg-[#0067c0]" />}
    </div>
  );
}

function Taskbar() {
  return (
    <div className="absolute bottom-0 left-0 flex h-[60px] w-[1920px] items-center border-t border-[#a9a9a9] bg-[#dadada] pb-px text-[#1b1b1b]">
      <div className="ml-[558px] grid grid-cols-2 gap-px pt-px">
        <div className="h-[14px] w-[14px] bg-gradient-to-br from-[#4fd0fb] to-[#22aaee]" />
        <div className="h-[14px] w-[14px] bg-gradient-to-br from-[#35bdf6] to-[#1591e2]" />
        <div className="h-[14px] w-[14px] bg-gradient-to-br from-[#22a5ec] to-[#0d80d8]" />
        <div className="h-[14px] w-[14px] bg-gradient-to-br from-[#1290e2] to-[#0673d1]" />
      </div>
      <div className="ml-[17px] flex h-[38px] w-[273px] shrink-0 items-center rounded-full bg-[#f4f4f4] pl-[13px] shadow-[0_0_0_1px_#c9c9c9,0_1px_1px_#9d9d9d]">
        <Line d={MAG} s={20} sw={1.600} />
        <Fit w={51} className="ml-[13px] text-[17.500px] leading-6 text-[#565656]">Search</Fit>
        <div className="ml-auto pr-[3px]">
          <Lizard />
        </div>
      </div>
      <div className="ml-[8px] flex gap-[7px]">
        <Slot>
          <svg width="30" height="28" viewBox="0 0 30 28">
            <rect y="7.500" width="23" height="20.500" rx="1.500" fill="#2b2b2b" />
            <rect x="8" width="22" height="20" rx="1" fill="#fff" opacity=".75" />
            <path d="M8 7.500h15V20H8z" fill="#8f8f8f" opacity=".65" />
          </svg>
        </Slot>
        <Slot>
          <svg width="30" height="28" viewBox="0 0 30 28" className="-mt-px">
            <defs>
              <linearGradient id="c1" x1="0" y1="0" x2="0" y2="1">
                <stop offset="0" stopColor="#16b1f4" />
                <stop offset=".5" stopColor="#2397d8" />
                <stop offset=".8" stopColor="#a3cc35" />
                <stop offset="1" stopColor="#f6c613" />
              </linearGradient>
              <linearGradient id="c2" x1="0" y1="0" x2="0" y2="1">
                <stop offset="0" stopColor="#b15bf0" />
                <stop offset=".5" stopColor="#f0529a" />
                <stop offset="1" stopColor="#ffab5c" />
              </linearGradient>
            </defs>
            <path d="M8 0h10c3 0 3.500 2 4 4l1 3.500h-5c-2 0-3 1-3.500 3L12 17c-.5 2-2 3-4 3H4c-3 0-4.500-2-3.500-5L4 4c.7-2.500 2-4 4-4z" fill="url(#c1)" />
            <path d="M15 0h3c3 0 3.500 2 4 4l1 3.500h-4C16 7 17 2 15 0z" fill="#1648c0" />
            <path d="M22 28H12c-3 0-3.500-2-4-4l-1-3.500h5c2 0 3-1 3.500-3L18 11c.5-2 2-3 4-3h4c3 0 4.500 2 3.500 5L26 24c-.7 2.500-2 4-4 4z" fill="url(#c2)" />
          </svg>
        </Slot>
        <Slot>
          <svg width="29" height="29" viewBox="0 0 29 29" className="mr-px">
            <defs>
              <linearGradient id="st" x1="0" y1="0" x2="1" y2="1">
                <stop offset="0" stopColor="#0a62ad" />
                <stop offset="1" stopColor="#223a68" />
              </linearGradient>
            </defs>
            <path d="M8 6V2a1.500 1.500 0 0 1 1.500-1.500h10A1.500 1.500 0 0 1 21 2v4" fill="none" stroke="#2cb4f0" strokeWidth="2" />
            <path d="M0 4h29v21a4 4 0 0 1-4 4H4a4 4 0 0 1-4-4z" fill="url(#st)" />
            <path d="M9 11h5v5H9z" fill="#f25022" />
            <path d="M15 11h5v5h-5z" fill="#7fba00" />
            <path d="M9 17h5v5H9z" fill="#00a4ef" />
            <path d="M15 17h5v5h-5z" fill="#ffb900" />
          </svg>
        </Slot>
        <Slot>
          <div className="relative">
            <svg width="29" height="28" viewBox="0 0 29 28">
              <rect x="8" width="20" height="20" rx="1" fill="#0f78d0" />
              <path d="M8 5h7v7H8z" fill="#1768b8" />
              <path d="M15 5h6v8h-6zM21 5h7v4h-7z" fill="#35b8f1" />
              <path d="M21 9h7v7h-7z" fill="#50d9ff" />
              <path d="M7 14l11 6 11-7v13.500a1.500 1.500 0 0 1-1.500 1.500h-19A1.500 1.500 0 0 1 7 26.500z" fill="#1793e3" />
              <path d="M7 16l20 12H8.500A1.500 1.500 0 0 1 7 26.500z" fill="#33b0f2" />
              <rect y="5" width="15" height="17" rx="1" fill="#0c62bb" />
            </svg>
            <div className="absolute top-[5px] left-0 flex h-[17px] w-[15px] items-center justify-center text-[12px] leading-none font-bold text-white">O</div>
          </div>
        </Slot>
        <Slot>
          <svg width="30" height="24" viewBox="0 0 30 24" className="-mt-px">
            <path d="M15 0l15 7.500L15 16 0 7.500z" fill="#0a4d92" />
            <path d="M15 7l9 4.500-9 5-9-5z" fill="#1482d4" />
            <path d="M0 7.500L15 16v8L0 15.500z" fill="#2eb5f5" />
            <path d="M30 7.500L15 16v8l15-8.500z" fill="#4bd0fd" />
          </svg>
        </Slot>
        <Slot state="run"><Folder className="-mt-[2px] h-[22px] w-7" /></Slot>
        <Slot state="run"><PanelIcon className="h-[23px] w-[30px]" /></Slot>
        <Slot state="run">
          <svg width="30" height="30" viewBox="-15 -15 30 30">
            {[0, 60, 120].map((a) => (
              <path key={a} d="M-4.500-14.500h9L6-9v18l-1.500 5.500h-9L-6 9V-9z" fill="#79828b" transform={`rotate(${a + 30})`} />
            ))}
            <circle r="11.500" fill="#79828b" />
            <circle r="7.600" fill="#b4bcc4" />
            <circle r="6.200" fill="#0c5bab" />
          </svg>
        </Slot>
        <Slot state="on"><InstallIcon className="-mt-[1px] h-[25px] w-7" /></Slot>
      </div>
      <div className="ml-auto flex items-center pr-[24px]">
        <Line d="M2.500 11 8 5.500l5.500 5.500" s={18} sw={1.500} />
        <svg width="20" height="14" viewBox="0 0 20 14" className="ml-[21px] shrink-0">
          <path d="M4 5.500A6 6 0 0 1 15 4.500c3 0 5 2 5 5L10 12 1 9z" fill="#0a64b8" />
          <path d="M4 5.500c3-1.500 6 0 8 2L4.500 13.500A4.200 4.200 0 0 1 4 5.500z" fill="#1282d8" />
          <path d="M4.500 13.500L10 9.500c3-2 7-2.500 10 .5 0 2-1.500 3.500-3.500 3.500z" fill="#2aa8f0" />
        </svg>
        <Fit w={29} className="ml-[24px] text-[15px] leading-5">ENG</Fit>
        <svg width="21" height="21" viewBox="0 0 21 21" fill="none" stroke="currentColor" strokeWidth="1.400" className="ml-[22px] shrink-0">
          <path d="M14 1H3A2 2 0 0 0 1 3v11a2 2 0 0 0 2 2h12M5 19.500h10M7 16v3M12 16v3M18 8v12" />
          <rect x="15.500" y="1" width="4.500" height="7" rx="1.500" />
          <path d="M15.500 4h4.500" />
        </svg>
        <svg width="20" height="18" viewBox="0 0 20 18" fill="none" stroke="currentColor" strokeWidth="1.300" strokeLinejoin="round" className="ml-[9px] shrink-0">
          <path d="M1 6h3.500L9 2v14l-4.500-4H1zM11.500 6.500a4 4 0 0 1 0 5" />
          <path d="M13.800 4a7 7 0 0 1 0 10" />
          <path d="M16.200 1.500a10.500 10.500 0 0 1 0 15" stroke="#aaa" />
        </svg>
        <svg width="21" height="18" viewBox="0 0 21 18" className="-mt-[2px] ml-[10px] shrink-0">
          <rect x="1.700" y="5" width="16" height="11" rx="2.500" fill="none" stroke="#1b1b1b" strokeWidth="1.400" />
          <path d="M5.500 7H16v7H3.500v-2.500zM18.500 8.500h1.500a.8.8 0 0 1 .8.8v2.400a.8.8 0 0 1-.8.8h-1.500z" fill="#1b1b1b" />
          <path d="M4-.5L0 7h3l-1 5L7.500 5H4.500L6-.5z" fill="#1b1b1b" stroke="#dadada" strokeWidth=".8" />
        </svg>
        <div className="-mt-[2px] flex w-[89px] flex-col items-end text-[15px] leading-5">
          <Fit w={56}>8:28 AM</Fit>
          <Fit w={69}>8/14/2025</Fit>
        </div>
      </div>
    </div>
  );
}

export default function App() {
  return (
    <div className="relative h-[1200px] w-[1920px] overflow-hidden bg-black font-['Open_Sans',sans-serif]">
      <DesktopIcons />
      <div className="absolute top-[456px] left-[1687px] text-[15px] leading-5 text-white">
        <Fit w={20}>.txt</Fit>
      </div>
      <ControlPanel />
      <Explorer />
      <Settings />
      <Installer />
      <Message />
      <Taskbar />
    </div>
  );
}
